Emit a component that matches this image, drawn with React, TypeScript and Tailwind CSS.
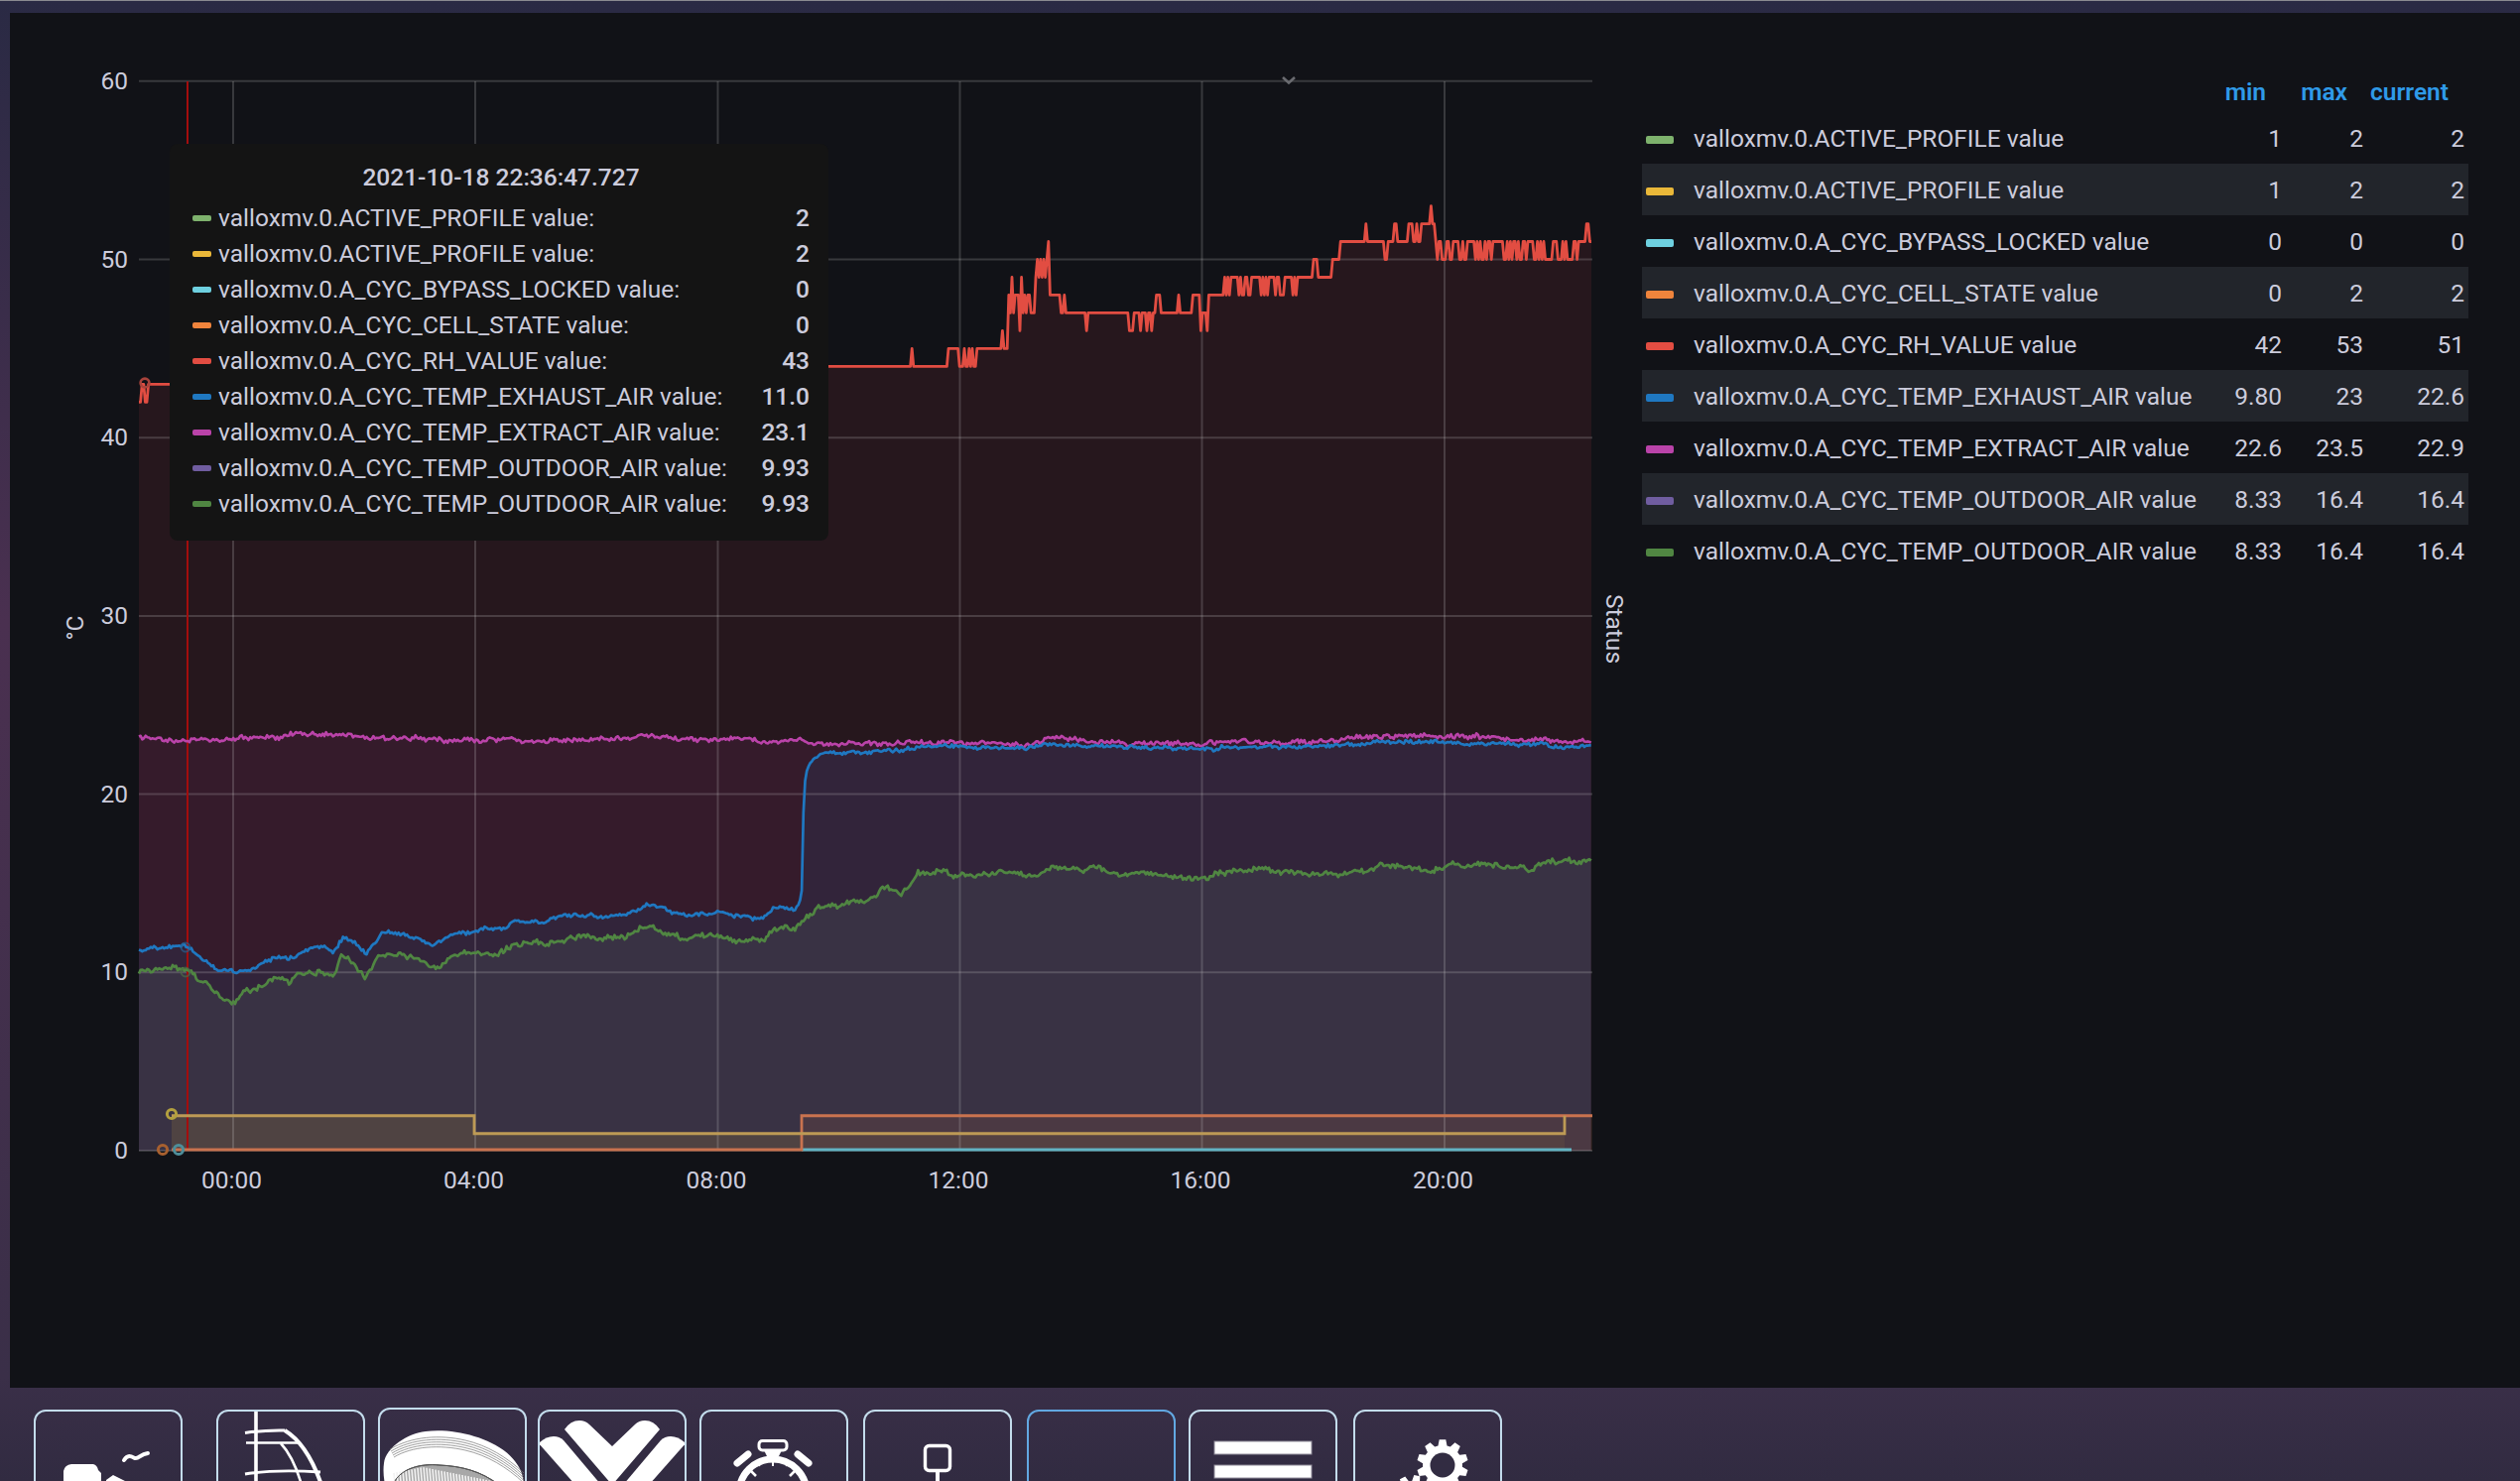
import React from "react";

const FONT = "Roboto, sans-serif";
const Y = (v: number) => 1160 - v * 17.97;
const LEFT = 140;
const RIGHT = 1605;
const BOTTOM = 1160;

function rng(seed: number) {
  let s = seed;
  return () => {
    s = (s * 1664525 + 1013904223) % 4294967296;
    return s / 4294967296;
  };
}

type P = [number, number];

function interp(pts: P[], x: number) {
  if (x <= pts[0][0]) return pts[0][1];
  for (let i = 1; i < pts.length; i++) {
    if (x <= pts[i][0]) {
      const [a, b] = pts[i - 1];
      const [c, d] = pts[i];
      return b + ((d - b) * (x - a)) / Math.max(c - a, 0.001);
    }
  }
  return pts[pts.length - 1][1];
}

function noisy(pts: P[], amp: number, seed: number) {
  const r = rng(seed);
  const out: P[] = [];
  let low = 0;
  for (let x = LEFT; x <= RIGHT; x += 1.7) {
    low = low * 0.7 + (r() - 0.5) * amp * 0.7;
    out.push([x, interp(pts, x) + low + (r() - 0.5) * amp]);
  }
  return out;
}

const z5 = (p: number[][]): P[] => p.map(([a, b]) => [100 + a / 1.96, 900 + b / 3]);
const z6 = (p: number[][]): P[] => p.map(([a, b]) => [700 + a / 1.742, 680 + b / 2.904]);

const bluePts: P[] = [
  ...z5([[78,175],[120,168],[165,160],[200,195],[235,235],[270,240],[300,230],[350,195],[375,200],[400,180],[445,165],[462,185],[483,130],[505,150],[527,185],[560,122],[600,122],[625,140],[660,160],[700,122],[735,122],[755,110],[795,110],[820,90],[880,85],[905,70],[1010,70],[1050,60],[1085,32],[1150,68],[1230,60],[1270,70],[1310,80]]),
  ...z6([[140,682],[175,685],[188,660],[192,350],[197,280],[210,240],[235,228],[300,225],[370,220],[395,208],[460,212],[590,215],[630,203],[700,210],[890,218],[930,212],[1050,214],[1120,208],[1210,198],[1320,198],[1450,203],[1568,213]]),
  [1605, 753],
];

const greenPts: P[] = [
  ...z5([[78,245],[120,232],[165,230],[210,275],[235,315],[265,328],[285,298],[310,295],[350,255],[375,270],[395,245],[440,235],[463,258],[478,190],[495,200],[525,260],[550,190],[590,182],[625,200],[665,230],[705,180],[780,185],[820,155],[880,155],[960,135],[1030,140],[1085,100],[1150,135],[1230,128],[1270,145],[1310,145]]),
  ...z6([[140,745],[175,745],[215,680],[260,670],[320,655],[335,620],[362,645],[390,585],[440,568],[460,590],[565,580],[600,597],[630,567],[665,562],[680,575],[700,560],[740,585],[800,582],[860,598],[900,592],[935,577],[1000,570],[1100,590],[1190,575],[1210,555],[1265,572],[1310,570],[1330,548],[1355,565],[1380,550],[1465,570],[1500,545],[1568,545]]),
  [1605, 867],
];

const magentaPts: P[] = [
  [140, Y(23.15)],[190, Y(22.95)],[230, Y(23.1)],[330, Y(23.4)],[420, Y(23.1)],[560, Y(23)],[660, Y(23.3)],
  ...z6([[0,190],[90,185],[130,200],[190,190],[210,208],[260,200],[330,205],[400,197],[590,205],[625,188],[700,197],[890,205],[950,195],[1080,200],[1150,188],[1220,178],[1330,178],[1450,190],[1568,195]]),
  [1605, 748],
];

function rhSeries(): P[] {
  const r = rng(77);
  const segs: [number, number, number, number, number][] = [
    [-9999, -400, 43, 43, 0],
    [-400, 205, 44, 44, 0],
    [205, 265, 45, 44, 0.45],
    [265, 310, 45, 45, 0],
    [310, 325, 46, 45, 0.5],
    [325, 340, 47, 48, 0.6],
    [340, 378, 47, 48, 0.45],
    [378, 400, 49, 50, 0.55],
    [400, 408, 50, 50, 0],
    [408, 428, 48, 48, 0],
    [428, 617, 47, 47, 0],
    [617, 630, 47, 48, 0.7],
    [630, 720, 47, 47, 0],
    [720, 752, 48, 48, 0],
    [752, 900, 48, 49, 0.55],
    [900, 965, 49, 49, 0],
    [965, 980, 50, 50, 0],
    [980, 1078, 51, 51, 0],
    [1078, 1140, 51, 51, 0],
    [1140, 1170, 52, 52, 0],
    [1170, 1450, 50, 51, 0.55],
    [1450, 9999, 51, 51, 0],
  ];
  const spikes: [number, number, number][] = [
    [74,76,45],[135,137,45],[189,191,45],[333,336,49],[348,350,46],[351,354,49],[403,406,51],[435,438,48],
    [479,481,46],[565,573,46],[587,590,46],[598,600,46],[609,611,46],[661,663,48],[673,675,48],[690,705,48],[706,708,46],[717,719,46],
    [726,728,49],[908,910,50],[928,938,50],[1030,1035,52],[1052,1054,52],[1068,1076,50],[1088,1095,52],[1115,1125,52],[1132,1135,52],[1161,1163,53],[1468,1473,52],
  ];
  const out: P[] = [];
  for (let x = LEFT; x <= RIGHT; x += 1.6) {
    const cx = (x - 850) * 1.96;
    const s = segs.find((q) => cx >= q[0] && cx < q[1]) || segs[0];
    let v = r() < s[4] ? s[3] : s[2];
    const sp = spikes.find((q) => cx >= q[0] && cx <= q[1]);
    if (sp) v = sp[2];
    if (x < 152 && (x < 143 || (x > 146 && x < 149))) v = 42;
    out.push([x, Y(v)]);
  }
  return out;
}

const line = (p: P[]) => p.map(([x, y], i) => `${i ? "L" : "M"}${x.toFixed(1)} ${y.toFixed(1)}`).join("");
const area = (p: P[]) => `${line(p)}L${p[p.length - 1][0]} ${BOTTOM}L${p[0][0]} ${BOTTOM}Z`;

const rh = rhSeries();
const magenta = noisy(magentaPts, 3.6, 11);
const blue = noisy(bluePts, 2.8, 23);
const green = noisy(greenPts, 4.2, 37);

const yTicks = [60, 50, 40, 30, 20, 10, 0];
const xTicks: [number, string][] = [
  [235, "00:00"],
  [479, "04:00"],
  [723.5, "08:00"],
  [967.5, "12:00"],
  [1211.5, "16:00"],
  [1456, "20:00"],
];

function Chart() {
  const grid = "rgba(217,217,217,0.2)";
  const y2 = Y(2) + 0.7;
  const y1 = Y(1) + 0.7;
  const y0 = BOTTOM - 1;
  return (
    <svg viewBox="10 13 1645 1386" className="block h-[1386px] w-[1645px] shrink-0" style={{ fontFamily: FONT }}>
      <path d={area(rh)} fill="rgba(226,70,85,0.1)" />
      <path d={area(magenta)} fill="rgba(186,67,169,0.1)" />
      <path d={area(blue)} fill="rgba(31,120,193,0.1)" />
      <path d={area(green)} fill="rgba(112,93,160,0.1)" />
      <path d={area(green)} fill="rgba(80,134,66,0.1)" />
      <path d={`M173 ${y2}H478V${y1}H808V${BOTTOM}H173Z`} fill="rgba(234,184,57,0.13)" />
      <path d={`M808 ${y1}H1577V${BOTTOM}H808Z`} fill="rgba(234,184,57,0.06)" />
      <path d={`M808 ${y2}H${RIGHT}V${BOTTOM}H808Z`} fill="rgba(239,132,60,0.1)" />

      {yTicks.map((v) => (
        <line key={v} x1={LEFT} x2={RIGHT} y1={Y(v)} y2={Y(v)} stroke={grid} strokeWidth={2} />
      ))}
      {xTicks.map(([x]) => (
        <line key={x} x1={x} x2={x} y1={82} y2={BOTTOM} stroke={grid} strokeWidth={2} />
      ))}

      <line x1={189} x2={189} y1={82} y2={BOTTOM} stroke="#a30d0d" strokeWidth={2} />

      <path d={`M808 ${y0}H1584`} stroke="#62b4c4" strokeWidth={2.8} fill="none" />
      <path d={`M173 ${y0}H808V${y2}H${RIGHT}`} stroke="#c9734f" strokeWidth={2.8} fill="none" />
      <path d={`M173 ${y2}H478V${y1}H1577V${y2}`} stroke="#bd9a55" strokeWidth={2.8} fill="none" />
      <path d={line(rh)} stroke="#e24d42" strokeWidth={2.8} fill="none" strokeLinejoin="round" />
      <path d={line(magenta)} stroke="#ba43a9" strokeWidth={2.6} fill="none" strokeLinejoin="round" />
      <path d={line(blue)} stroke="#1f78c1" strokeWidth={2.7} fill="none" strokeLinejoin="round" />
      <path d={line(green)} stroke="#508642" strokeWidth={2.7} fill="none" strokeLinejoin="round" />

      <circle cx={173} cy={1123} r={4.6} fill="none" stroke="#b3a03f" strokeWidth={3} />
      <circle cx={164} cy={1159} r={4.6} fill="none" stroke="#a8602f" strokeWidth={3} />
      <circle cx={180} cy={1159} r={4.6} fill="none" stroke="#4e8e9a" strokeWidth={3} />
      <circle cx={146} cy={386} r={4.4} fill="none" stroke="#a8433c" strokeWidth={2.6} />
      <circle cx={187} cy={955} r={4.4} fill="none" stroke="#28608f" strokeWidth={2} opacity={0.7} />
      <circle cx={187} cy={980} r={4.4} fill="none" stroke="#4c6b46" strokeWidth={2} opacity={0.7} />

      <path d="M1293 78L1299 83.5L1305 78" fill="none" stroke="#6a6b70" strokeWidth={2.6} />

      <g fill="#ccccdc" fontSize={24.5}>
        {yTicks.map((v) => (
          <text key={v} x={129} y={Y(v) + 8} textAnchor="end">
            {v}
          </text>
        ))}
        {xTicks.map(([x, t]) => (
          <text key={t} x={x - 1.5} y={1197.5} textAnchor="middle">
            {t}
          </text>
        ))}
        <text transform="translate(84 633) rotate(-90)" textAnchor="middle">
          °C
        </text>
        <text transform="translate(1619 634) rotate(90)" textAnchor="middle">
          Status
        </text>
      </g>
    </svg>
  );
}

const tooltipRows = [
  ["bg-[#7eb26d]", "valloxmv.0.ACTIVE_PROFILE value:", "2"],
  ["bg-[#eab839]", "valloxmv.0.ACTIVE_PROFILE value:", "2"],
  ["bg-[#6ed0e0]", "valloxmv.0.A_CYC_BYPASS_LOCKED value:", "0"],
  ["bg-[#ef843c]", "valloxmv.0.A_CYC_CELL_STATE value:", "0"],
  ["bg-[#e24d42]", "valloxmv.0.A_CYC_RH_VALUE value:", "43"],
  ["bg-[#1f78c1]", "valloxmv.0.A_CYC_TEMP_EXHAUST_AIR value:", "11.0"],
  ["bg-[#ba43a9]", "valloxmv.0.A_CYC_TEMP_EXTRACT_AIR value:", "23.1"],
  ["bg-[#705da0]", "valloxmv.0.A_CYC_TEMP_OUTDOOR_AIR value:", "9.93"],
  ["bg-[#508642]", "valloxmv.0.A_CYC_TEMP_OUTDOOR_AIR value:", "9.93"],
];

const legendRows = [
  ["bg-[#7eb26d]", "valloxmv.0.ACTIVE_PROFILE value", "1", "2", "2"],
  ["bg-[#eab839]", "valloxmv.0.ACTIVE_PROFILE value", "1", "2", "2"],
  ["bg-[#6ed0e0]", "valloxmv.0.A_CYC_BYPASS_LOCKED value", "0", "0", "0"],
  ["bg-[#ef843c]", "valloxmv.0.A_CYC_CELL_STATE value", "0", "2", "2"],
  ["bg-[#e24d42]", "valloxmv.0.A_CYC_RH_VALUE value", "42", "53", "51"],
  ["bg-[#1f78c1]", "valloxmv.0.A_CYC_TEMP_EXHAUST_AIR value", "9.80", "23", "22.6"],
  ["bg-[#ba43a9]", "valloxmv.0.A_CYC_TEMP_EXTRACT_AIR value", "22.6", "23.5", "22.9"],
  ["bg-[#705da0]", "valloxmv.0.A_CYC_TEMP_OUTDOOR_AIR value", "8.33", "16.4", "16.4"],
  ["bg-[#508642]", "valloxmv.0.A_CYC_TEMP_OUTDOOR_AIR value", "8.33", "16.4", "16.4"],
];

function Tooltip() {
  return (
    <div className="absolute left-[160.5px] top-[132px] h-[400px] w-[664.5px] rounded-lg bg-[#141414] pb-[19px] pl-[23.5px] pr-[19px] pt-[19px] text-[24.5px] text-[#ccccdc]">
      <div className="mb-[8px] h-[30px] text-center font-medium leading-[30px]">2021-10-18 22:36:47.727</div>
      {tooltipRows.map(([c, n, v], i) => (
        <div key={i} className="flex h-[36px] items-center leading-[36px]">
          <span className={`mr-[7px] h-[6px] w-[19px] shrink-0 rounded-[2px] ${c}`} />
          <span className="flex-1 whitespace-nowrap">{n}</span>
          <span className="font-medium">{v}</span>
        </div>
      ))}
    </div>
  );
}

function Legend() {
  return (
    <div className="mr-[52px] mt-[60px] w-[833px] shrink-0 text-[24.5px] text-[#ccccdc]">
      <div className="grid h-[40px] grid-cols-[1fr_82px_82px_102px] items-center pr-[20px] font-semibold text-[#2f9ae8]">
        <span />
        <span className="text-right">min</span>
        <span className="text-right">max</span>
        <span className="text-right">current</span>
      </div>
      {legendRows.map(([c, n, a, b, d], i) => (
        <div
          key={i}
          className={`grid h-[52px] grid-cols-[1fr_82px_82px_102px] items-center pr-[4px] pt-[3px] ${i % 2 === 1 ? "bg-[#22252b]" : ""}`}
        >
          <span className="flex items-center whitespace-nowrap pl-[4px]">
            <span className={`mr-[20px] h-[8px] w-[28px] shrink-0 rounded-[2px] ${c}`} />
            {n}
          </span>
          <span className="text-right">{a}</span>
          <span className="text-right">{b}</span>
          <span className="text-right">{d}</span>
        </div>
      ))}
    </div>
  );
}

function gearPath(cx: number, cy: number, ro: number, ri: number, teeth: number, rot = 0) {
  const pts: string[] = [];
  const step = (Math.PI * 2) / teeth;
  for (let i = 0; i < teeth; i++) {
    const a = rot + i * step;
    const list: [number, number][] = [
      [ri, a - step * 0.36],
      [ro, a - step * 0.2],
      [ro, a + step * 0.2],
      [ri, a + step * 0.36],
    ];
    list.forEach(([r, t]) => pts.push(`${(cx + r * Math.cos(t)).toFixed(1)} ${(cy + r * Math.sin(t)).toFixed(1)}`));
  }
  return `M${pts.join("L")}Z`;
}

function Svg({ children }: { children?: React.ReactNode }) {
  return (
    <svg viewBox="2 2 146 116" className="block h-[116px] w-[146px]">
      {children}
    </svg>
  );
}

function IconSky() {
  return (
    <Svg>
      <path d="M91 51C95 45 98 47 102 49C106 50 107 45 115 44" fill="none" stroke="#fff" strokeWidth={4} strokeLinecap="round" />
      <path d="M30 62Q31 56 38 55L60 55Q64 56 65 61L68 64V116H30Z" fill="#fff" />
      <path d="M73 71L80 66L96 74V116H73Z" fill="#fff" />
    </Svg>
  );
}

function IconDome() {
  return (
    <Svg>
      <path d="M40 2V118" stroke="#fff" strokeWidth={3.6} />
      <path d="M29 23.5Q50 20.5 69 21" stroke="#fff" strokeWidth={3} fill="none" />
      <path d="M30 33.5H85" stroke="#fff" strokeWidth={2.4} fill="none" />
      <path d="M29 65Q60 60 105 63" stroke="#fff" strokeWidth={3} fill="none" />
      <path d="M69 21Q92 35 106 76" stroke="#fff" strokeWidth={4} fill="none" />
      <path d="M65 34Q78 48 86 76" stroke="#fff" strokeWidth={2.6} fill="none" />
    </Svg>
  );
}

function IconFan() {
  const hatch: number[] = [];
  for (let x = 16; x < 122; x += 3) hatch.push(x);
  return (
    <Svg>
      <path d="M6 56C8 40 30 26 48 24C78 20 122 32 138 54C146 64 147 72 148 90L20 110C8 90 4 70 6 56Z" fill="#fff" />
      {[0, 2.5, 5, 7.5, 10].map((d) => (
        <path
          key={d}
          d={`M${12 + d * 0.4} ${42 + d * 0.8}C34 ${29 + d} 62 ${27 + d} 88 ${33 + d}C110 ${38 + d} 130 ${50 + d} 147 ${66 + d}`}
          fill="none"
          stroke="#777"
          strokeWidth={0.7}
        />
      ))}
      <path d="M17 74C24 62 42 56 62 58C84 59 104 64 122 78L120 118H17Z" fill="#a8a8a8" stroke="#444" strokeWidth={1} />
      {hatch.map((x, i) => (
        <line key={i} x1={x} x2={x + 5} y1={60 + Math.abs(x - 45) * 0.2} y2={118} stroke="#f2f2f2" strokeWidth={1.6} />
      ))}
      <path d="M17 74C24 62 42 56 62 58C84 59 104 64 122 78" fill="none" stroke="#555" strokeWidth={1} />
    </Svg>
  );
}

function IconV() {
  return (
    <Svg>
      <path d="M27 20Q33 11 42 11Q48 11 52 15L75 37L98 15Q102 11 108 11Q117 11 123 20L75 76Z" fill="#fff" />
      <path d="M1 34Q8 27 16 27Q22 27 26 31L64 76H38Z" fill="#fff" />
      <path d="M149 34Q142 27 134 27Q128 27 124 31L86 76H112Z" fill="#fff" />
    </Svg>
  );
}

function IconWatch() {
  const cx = 74;
  const cy = 84;
  return (
    <Svg>
      <rect x={60} y={31.5} width={28} height={9.5} rx={3.5} fill="none" stroke="#fff" strokeWidth={3} />
      <path d="M65 41H83L80 47H68Z" fill="#fff" />
      <circle cx={cx} cy={cy} r={34} fill="none" stroke="#fff" strokeWidth={7} />
      <path d="M74 50V57M62 52L60 57M86 52L88 57" stroke="#fff" strokeWidth={2} />
      <path d="M50 60L57 67M98 60L91 67" stroke="#fff" strokeWidth={2.6} />
      <path d="M38 54L49 45M110 54L99 45" stroke="#fff" strokeWidth={7} strokeLinecap="round" />
      <path d="M48 62L52 58M100 62L96 58" stroke="#fff" strokeWidth={4} />
    </Svg>
  );
}

function IconPin() {
  return (
    <Svg>
      <rect x={62.5} y={36.5} width={25} height={25} rx={4} fill="none" stroke="#fff" strokeWidth={3.4} />
      <rect x={73} y={63} width={4} height={50} fill="#fff" />
    </Svg>
  );
}

function IconMenu() {
  return (
    <Svg>
      <rect x={26} y={32} width={98} height={13} fill="#fff" stroke="#8e8a98" strokeWidth={1} />
      <rect x={26} y={56} width={98} height={13} fill="#fff" stroke="#8e8a98" strokeWidth={1} />
      <rect x={26} y={80} width={98} height={13} fill="#fff" />
    </Svg>
  );
}

function IconGear() {
  return (
    <Svg>
      <path d={gearPath(90, 56, 26, 20, 10, -Math.PI / 2)} fill="#fff" />
      <circle cx={90} cy={56} r={12.5} fill="#322c42" />
      <path d={gearPath(60, 88, 22, 16, 9, -Math.PI / 2 + 0.2)} fill="#fff" />
    </Svg>
  );
}

const buttons: [string, string, React.ReactNode][] = [
  ["ml-[34px]", "border-[#c3dcec]", <IconSky key="a" />],
  ["ml-[34px]", "border-[#c3dcec]", <IconDome key="b" />],
  ["ml-[13px] -mt-[2px]", "border-[#c3dcec]", <IconFan key="c" />],
  ["ml-[11px]", "border-[#c3dcec]", <IconV key="d" />],
  ["ml-[13px]", "border-[#c3dcec]", <IconWatch key="e" />],
  ["ml-[15px]", "border-[#c3dcec]", <IconPin key="f" />],
  ["ml-[15px]", "border-[#62a8e2]", null],
  ["ml-[13px]", "border-[#c3dcec]", <IconMenu key="g" />],
  ["ml-[16px]", "border-[#c3dcec]", <IconGear key="h" />],
];

export default function App() {
  return (
    <div className="flex h-[1493px] w-[2540px] flex-col overflow-hidden border-t border-t-[#8b8b90] bg-[linear-gradient(180deg,#2a2a44_0%,#4a3050_42%,#3a2f48_93%,#312b41_100%)] font-['Roboto',sans-serif]">
      <main className="relative ml-[10px] mt-[12px] flex h-[1386px] shrink-0 bg-[#111217]">
        <Chart />
        <Legend />
        <Tooltip />
      </main>
      <footer className="flex flex-1 items-start overflow-hidden pt-[22px]">
        {buttons.map(([m, b, icon], i) => (
          <div key={i} className={`h-[120px] w-[150px] shrink-0 overflow-hidden rounded-[12px] border-2 ${m} ${b}`}>
            {icon}
          </div>
        ))}
      </footer>
    </div>
  );
}
